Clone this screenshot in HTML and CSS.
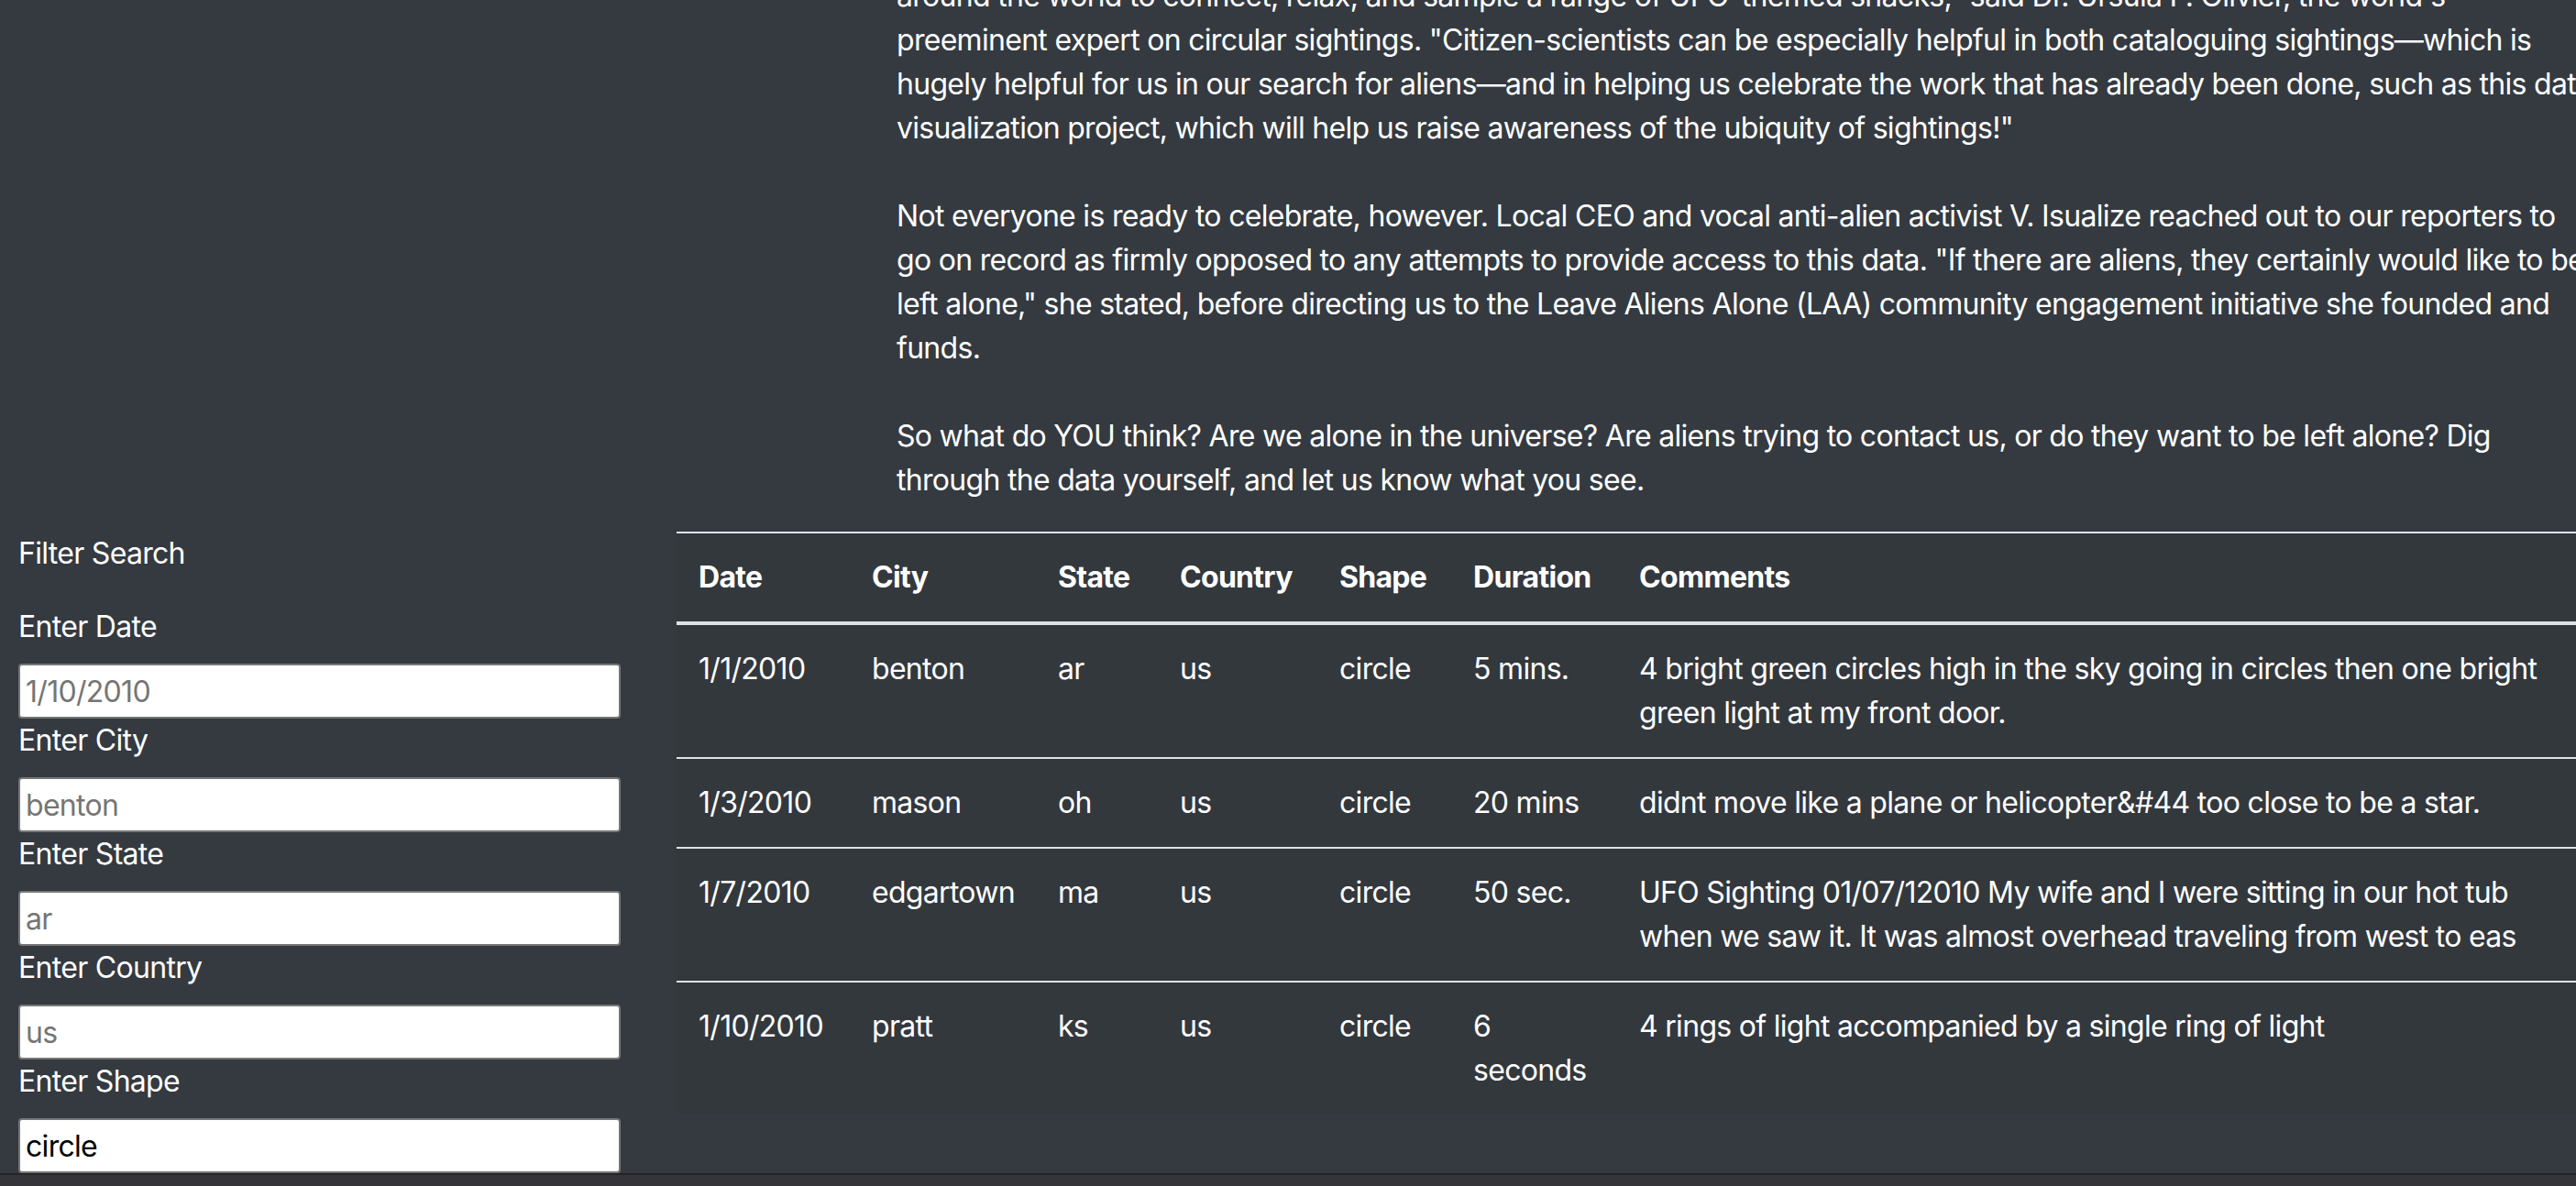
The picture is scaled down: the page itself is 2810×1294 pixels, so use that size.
FILE: index.html
```html
<!DOCTYPE html>
<html lang="en">
<head>
<meta charset="utf-8">
<title>UFO Sightings</title>
<link rel="stylesheet" href="styles.css">
</head>
<body>
<div class="page">
  <article class="story">
    <p>around the world to connect, relax, and sample a range of UFO-themed snacks," said Dr. Ursula F. Olivier, the world's<br>
    preeminent expert on circular sightings. "Citizen-scientists can be especially helpful in both cataloguing sightings—which is<br>
    hugely helpful for us in our search for aliens—and in helping us celebrate the work that has already been done, such as this data<br>
    visualization project, which will help us raise awareness of the ubiquity of sightings!"<br>
    <br>
    Not everyone is ready to celebrate, however. Local CEO and vocal anti-alien activist V. Isualize reached out to our reporters to<br>
    go on record as firmly opposed to any attempts to provide access to this data. "If there are aliens, they certainly would like to be<br>
    left alone," she stated, before directing us to the Leave Aliens Alone (LAA) community engagement initiative she founded and<br>
    funds.<br>
    <br>
    So what do YOU think? Are we alone in the universe? Are aliens trying to contact us, or do they want to be left alone? Dig<br>
    through the data yourself, and let us know what you see.</p>
  </article>

  <div class="data-row">
    <aside class="filters">
      <div class="filters-title">Filter Search</div>
      <div class="field">
        <label for="date">Enter Date</label>
        <input id="date" type="text" placeholder="1/10/2010">
      </div>
      <div class="field">
        <label for="city">Enter City</label>
        <input id="city" type="text" placeholder="benton">
      </div>
      <div class="field">
        <label for="state">Enter State</label>
        <input id="state" type="text" placeholder="ar">
      </div>
      <div class="field">
        <label for="country">Enter Country</label>
        <input id="country" type="text" placeholder="us">
      </div>
      <div class="field">
        <label for="shape">Enter Shape</label>
        <input id="shape" type="text" value="circle">
      </div>
    </aside>

    <div class="table-wrap">
      <table class="sightings">
        <colgroup>
          <col class="c-date">
          <col class="c-city">
          <col class="c-state">
          <col class="c-country">
          <col class="c-shape">
          <col class="c-duration">
          <col class="c-comments">
        </colgroup>
        <thead>
          <tr>
            <th>Date</th><th>City</th><th>State</th><th>Country</th><th>Shape</th><th>Duration</th><th>Comments</th>
          </tr>
        </thead>
        <tbody>
          <tr>
            <td>1/1/2010</td><td>benton</td><td>ar</td><td>us</td><td>circle</td><td>5 mins.</td>
            <td>4 bright green circles high in the sky going in circles then one bright<br>green light at my front door.</td>
          </tr>
          <tr>
            <td>1/3/2010</td><td>mason</td><td>oh</td><td>us</td><td>circle</td><td>20 mins</td>
            <td>didnt move like a plane or helicopter&amp;#44 too close to be a star.</td>
          </tr>
          <tr>
            <td>1/7/2010</td><td>edgartown</td><td>ma</td><td>us</td><td>circle</td><td>50 sec.</td>
            <td>UFO Sighting 01/07/12010 My wife and I were sitting in our hot tub<br>when we saw it. It was almost overhead traveling from west to eas</td>
          </tr>
          <tr>
            <td>1/10/2010</td><td>pratt</td><td>ks</td><td>us</td><td>circle</td><td>6<br>seconds</td>
            <td>4 rings of light accompanied by a single ring of light</td>
          </tr>
        </tbody>
      </table>
    </div>
  </div>
</div>
<div class="hscroll"></div>
</body>
</html>
```

FILE: styles.css
```css
html, body {
  margin: 0;
  padding: 0;
  overflow: hidden;
  background: #343a40;
}

body {
  font-family: Inter, "Noto Sans", "Liberation Sans", sans-serif;
  font-size: 32px;
  line-height: 48px;
  letter-spacing: -0.7px;
  color: #fff;
}

.page {
  height: 1294px;
  overflow: hidden;
}

.story {
  margin: -28px 0 32px 978px;
  white-space: nowrap;
}

.story p {
  margin: 0;
}

.data-row {
  display: flex;
  align-items: flex-start;
}

.filters {
  flex: none;
  width: 657px;
  padding-left: 20px;
}

.filters-title {
  margin-bottom: 32px;
}

.field label {
  display: block;
  margin-bottom: 16px;
}

.field input {
  display: block;
  box-sizing: border-box;
  width: 100%;
  height: 60px;
  margin: 0;
  padding: 0 6px;
  border: 2px solid #767676;
  border-radius: 4px;
  background: #fff;
  color: #000;
  font-family: inherit;
  font-size: 32px;
  letter-spacing: -0.7px;
}

.field input::placeholder {
  color: #757575;
}

.table-wrap {
  flex: none;
  margin-left: 61px;
}

.sightings {
  width: 2240px;
  table-layout: fixed;
  border-collapse: separate;
  border-spacing: 0;
  background: #33383d;
}

.c-date { width: 189px; }
.c-city { width: 203px; }
.c-state { width: 133px; }
.c-country { width: 174px; }
.c-shape { width: 146px; }
.c-duration { width: 181px; }

.sightings th,
.sightings td {
  padding: 24px;
  text-align: left;
  vertical-align: top;
  white-space: nowrap;
}

.sightings th {
  font-weight: 700;
  border-top: 2px solid #dee2e6;
  border-bottom: 4px solid #dee2e6;
}

.sightings tbody tr + tr td {
  border-top: 2px solid #dee2e6;
}

.hscroll {
  position: fixed;
  left: 0;
  right: 0;
  bottom: 0;
  height: 12px;
  border-top: 2px solid #242426;
  background: #353539;
}
```
